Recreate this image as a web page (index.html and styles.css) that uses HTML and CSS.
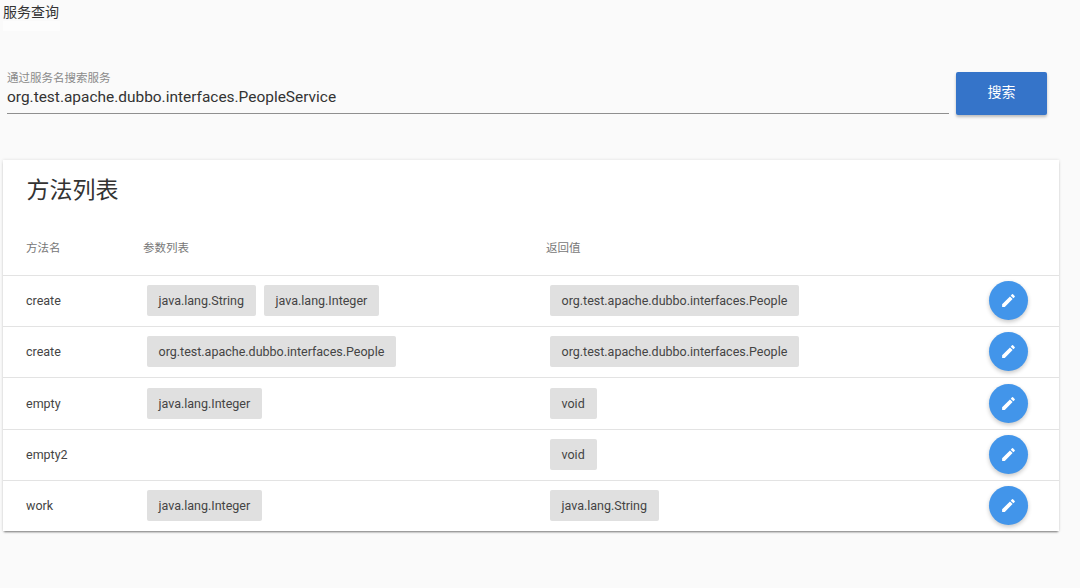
FILE: index.html
```html
<!DOCTYPE html>
<html lang="zh">
<head>
<meta charset="utf-8">
<title>服务查询</title>
<link rel="stylesheet" href="styles.css">
</head>
<body>
<header class="page-head"><h1 class="page-title">服务查询</h1><div class="tab-strip"></div></header>
<section class="search">
  <div class="field">
    <label class="field-label">通过服务名搜索服务</label>
    <div class="field-value">org.test.apache.dubbo.interfaces.PeopleService</div>
  </div>
  <button class="search-btn">搜索</button>
</section>
<main class="card">
  <h2 class="card-title">方法列表</h2>
  <div class="row head"><div>方法名</div><div>参数列表</div><div>返回值</div></div>
  <div class="row">
    <div>create</div>
    <div class="chips"><span class="chip">java.lang.String</span><span class="chip">java.lang.Integer</span></div>
    <div class="chips"><span class="chip">org.test.apache.dubbo.interfaces.People</span></div>
    <button class="fab"><svg viewBox="0 0 24 24" class="icon"><path d="M3 17.25V21h3.75L17.81 9.94l-3.75-3.75L3 17.25zM20.71 7.04a1 1 0 0 0 0-1.41l-2.34-2.34a1 1 0 0 0-1.41 0l-1.83 1.83 3.75 3.75 1.83-1.83z"/></svg></button>
  </div>
  <div class="row">
    <div>create</div>
    <div class="chips"><span class="chip">org.test.apache.dubbo.interfaces.People</span></div>
    <div class="chips"><span class="chip">org.test.apache.dubbo.interfaces.People</span></div>
    <button class="fab"><svg viewBox="0 0 24 24" class="icon"><path d="M3 17.25V21h3.75L17.81 9.94l-3.75-3.75L3 17.25zM20.71 7.04a1 1 0 0 0 0-1.41l-2.34-2.34a1 1 0 0 0-1.41 0l-1.83 1.83 3.75 3.75 1.83-1.83z"/></svg></button>
  </div>
  <div class="row">
    <div>empty</div>
    <div class="chips"><span class="chip">java.lang.Integer</span></div>
    <div class="chips"><span class="chip">void</span></div>
    <button class="fab"><svg viewBox="0 0 24 24" class="icon"><path d="M3 17.25V21h3.75L17.81 9.94l-3.75-3.75L3 17.25zM20.71 7.04a1 1 0 0 0 0-1.41l-2.34-2.34a1 1 0 0 0-1.41 0l-1.83 1.83 3.75 3.75 1.83-1.83z"/></svg></button>
  </div>
  <div class="row">
    <div>empty2</div>
    <div class="chips"></div>
    <div class="chips"><span class="chip">void</span></div>
    <button class="fab"><svg viewBox="0 0 24 24" class="icon"><path d="M3 17.25V21h3.75L17.81 9.94l-3.75-3.75L3 17.25zM20.71 7.04a1 1 0 0 0 0-1.41l-2.34-2.34a1 1 0 0 0-1.41 0l-1.83 1.83 3.75 3.75 1.83-1.83z"/></svg></button>
  </div>
  <div class="row">
    <div>work</div>
    <div class="chips"><span class="chip">java.lang.Integer</span></div>
    <div class="chips"><span class="chip">java.lang.String</span></div>
    <button class="fab"><svg viewBox="0 0 24 24" class="icon"><path d="M3 17.25V21h3.75L17.81 9.94l-3.75-3.75L3 17.25zM20.71 7.04a1 1 0 0 0 0-1.41l-2.34-2.34a1 1 0 0 0-1.41 0l-1.83 1.83 3.75 3.75 1.83-1.83z"/></svg></button>
  </div>
</main>
</body>
</html>
```
FILE: styles.css
```css
* { box-sizing: border-box; }
html, body { margin: 0; padding: 0; }
body {
  background: #fafafa;
  color: #333;
  font-family: Roboto, "Noto Sans CJK SC", sans-serif;
  height: 588px;
  overflow: hidden;
}
.page-head { height: 32px; padding: 3px 0 0 3px; }
.page-title { margin: 0; font-size: 14px; font-weight: 400; line-height: 18px; color: #333; }
.tab-strip { width: 57px; height: 10px; background: #fdfdfd; }
.search {
  display: flex;
  align-items: flex-start;
  gap: 7px;
  padding: 40px 33px 0 7px;
  height: 128px;
}
.field {
  flex: 1;
  height: 42px;
  border-bottom: 1px solid #8f8f8f;
}
.field-label { display: block; font-size: 11.5px; line-height: 12px; color: #8a8a8a; height: 13px; }
.field-value { font-size: 15.45px; line-height: 24px; color: #333; }
.search-btn {
  width: 91px;
  height: 43px;
  padding: 0 0 6px;
  border: 0;
  border-radius: 2px;
  background: #3574c9;
  color: #fff;
  font-family: inherit;
  font-size: 14px;
  box-shadow: 0 2px 3px rgba(0,0,0,.25);
}
.card {
  margin-left: 3px;
  width: 1056px;
  height: 371px;
  background: #fff;
  box-shadow: 0 2px 2px -1px rgba(0,0,0,.5), 0 0 3px rgba(0,0,0,.12);
}
.card-title { margin: 0; height: 64px; padding: 14px 0 0 23.5px; font-size: 23px; font-weight: 400; line-height: 34px; color: #333; }
.row {
  display: grid;
  grid-template-columns: 117px 403px 1fr 39px;
  align-items: center;
  height: 51.2px;
  padding: 0 31px 0.6px 23px;
  font-size: 12.5px;
  color: #444;
  border-top: 1px solid #e3e3e3;
}
.row.head { height: 51px; padding-bottom: 6px; border-top: 0; font-size: 11.5px; color: #777; }
.chips { display: flex; gap: 8px; padding-left: 4px; }
.chip {
  height: 31px;
  padding: 0 12px 0 11.5px;
  display: inline-flex;
  align-items: center;
  background: #e0e0e0;
  border-radius: 2px;
  color: #444;
  font-size: 12.5px;
}
.fab {
  width: 39px;
  height: 39px;
  padding: 0;
  border: 0;
  border-radius: 50%;
  background: #4295ea;
  display: flex;
  align-items: center;
  justify-content: center;
  box-shadow: 0 2px 4px rgba(0,0,0,.22);
}
.icon { width: 17px; height: 17px; fill: #fff; }
```
